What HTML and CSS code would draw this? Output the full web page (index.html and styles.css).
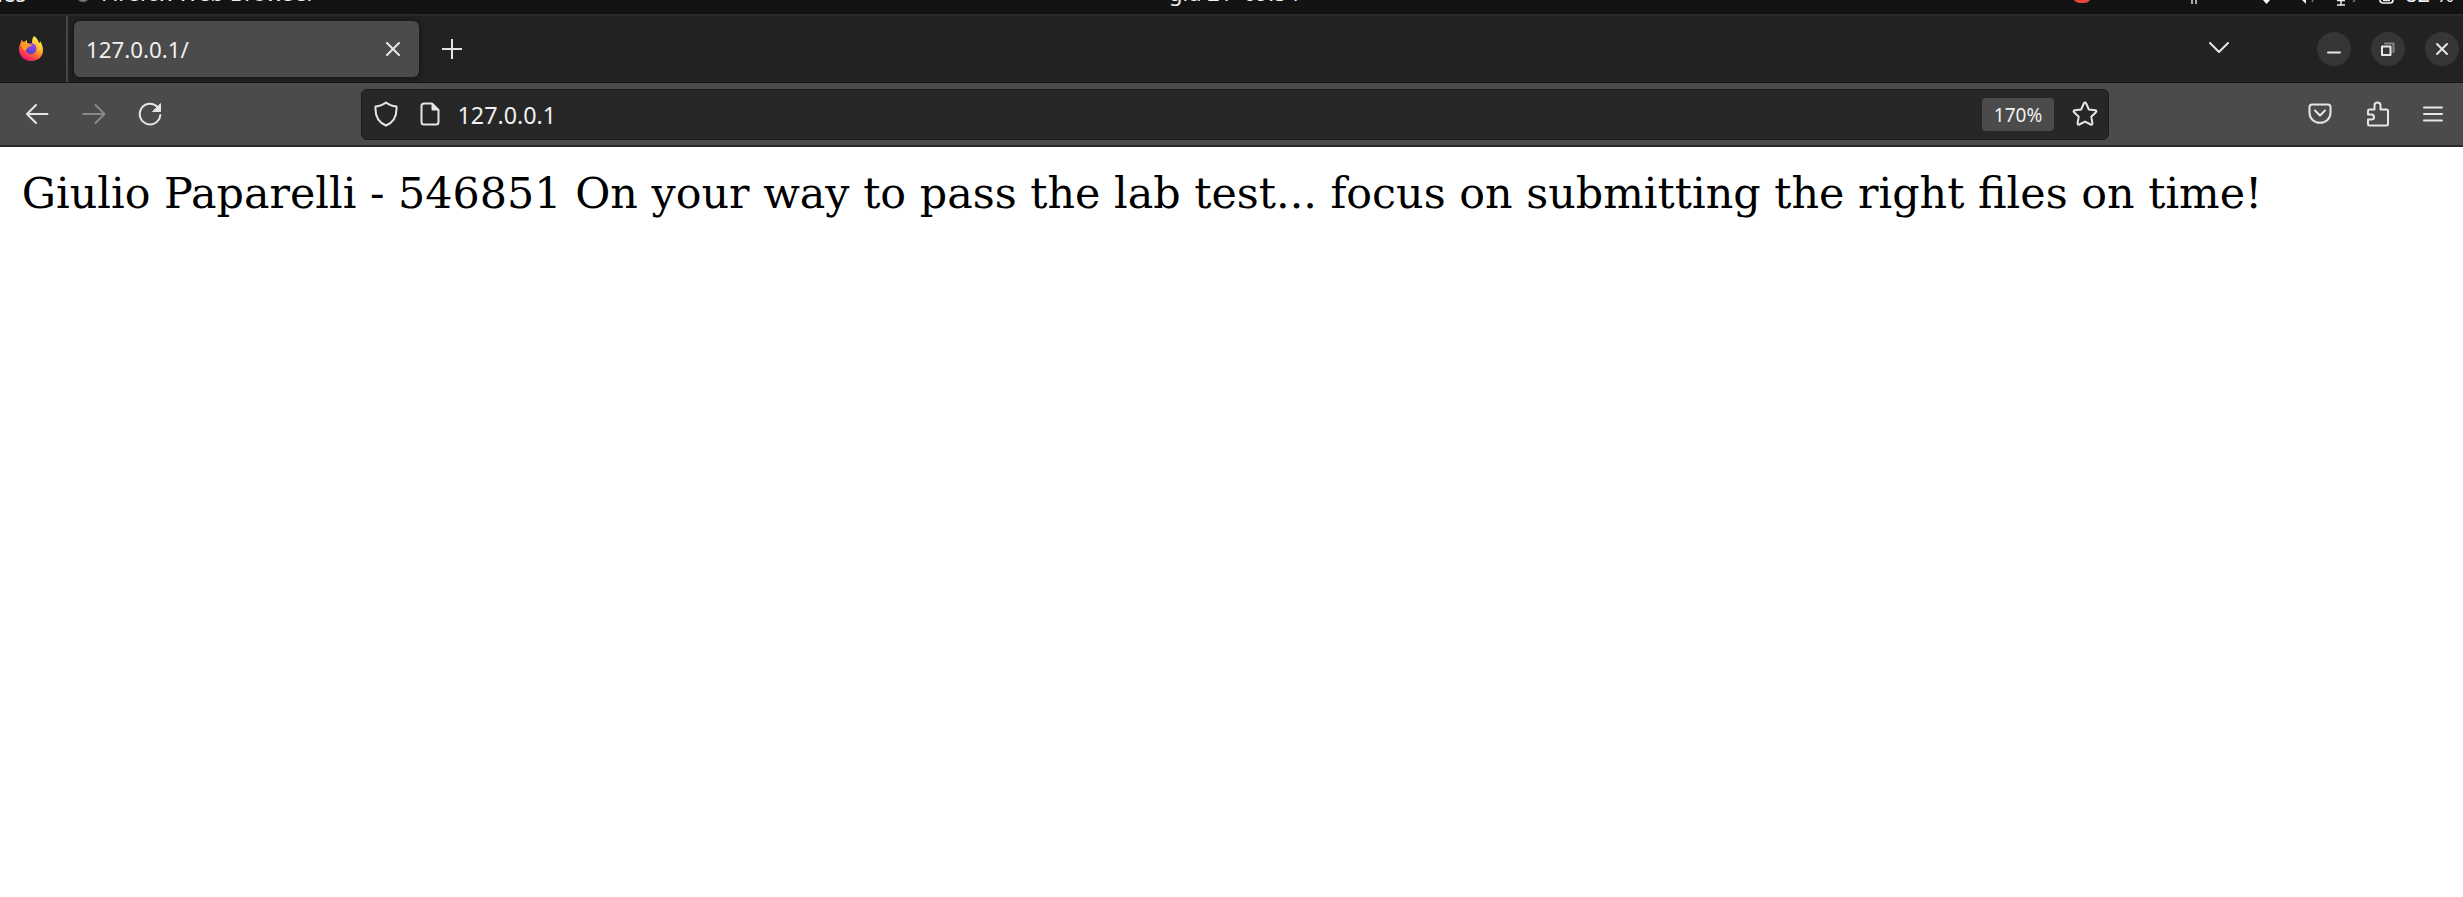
FILE: index.html
```
<!DOCTYPE html>
<html lang="en">
<head>
<meta charset="utf-8">
<title>127.0.0.1/</title>
<link rel="stylesheet" href="styles.css">
</head>
<body>
<header class="system-bar">
  <span class="activities">Activities</span>
  <span class="app-dot"></span>
  <span class="app-name">Firefox Web Browser</span>
  <span class="clock">giu 21  09:54</span>
  <svg class="status" width="350" height="14" viewBox="2050 0 350 14">
    <path d="M2074 0h16q-2 3-6 3h-4q-4 0-6-3z" fill="#e8453c"/>
    <path d="M2192 0v4M2196 0v4" stroke="#ddd" stroke-width="1.5"/>
    <path d="M2263 0h7l-3.500 4z" fill="#fff"/>
    <path d="M2302 0h4v4z" fill="#eee"/>
    <path d="M2313 0l-1 2M2355 0l-2 2" stroke="#777" stroke-width="1.500"/>
    <path d="M2341 0v5M2337 5h8M2337 .5h8" stroke="#eee" stroke-width="1.500"/>
    <path d="M2380 0q0 3 3 3h7q3 0 3-3M2383 .5h7" fill="none" stroke="#eee" stroke-width="1.700"/>
  </svg>
  <span class="battery">82 %</span>
</header>

<nav class="tab-strip">
  <div class="firefox-slot">
    <svg width="26" height="27" viewBox="0 0 26 27">
      <defs>
        <linearGradient id="flame" x1=".8" y1=".1" x2=".25" y2=".95">
          <stop offset="0" stop-color="#fff04a"/><stop offset=".35" stop-color="#ffb52e"/>
          <stop offset=".65" stop-color="#ff5a35"/><stop offset="1" stop-color="#ed1378"/>
        </linearGradient>
        <linearGradient id="globe" x1=".7" y1="0" x2=".4" y2="1">
          <stop offset="0" stop-color="#a24be8"/><stop offset="1" stop-color="#5440c9"/>
        </linearGradient>
      </defs>
      <path d="M16 1c3 2 4 4 5 7 1-.5 1-1 1-2 2 3 3 6 3 9 0 7-5 11-12 11S1 21 1 14c0-3 1-5 2-7V5l3 2 3-2v3l5 1c0-3 0-6 2-8z" fill="url(#flame)"/>
      <circle cx="13" cy="13.500" r="5.500" fill="url(#globe)"/>
      <path d="M3 9c3-2 6-1 7 0 1 .5 3 .5 4 .8-.5 1.500-2 1.700-3.500 2.200C9 13 8 14 8 16c-3-1-5-4-5-7z" fill="#ff9a24"/>
    </svg>
  </div>
  <div class="tab">
    <span class="tab-title">127.0.0.1/</span>
    <svg class="line" width="14" height="14" viewBox="0 0 14 14"><path d="M1 1l12 12M13 1L1 13"/></svg>
  </div>
  <svg class="line new-tab" width="20" height="20" viewBox="0 0 20 20"><path d="M10 .5v19M.5 10h19"/></svg>
  <div class="window-controls">
    <svg class="line tabs-menu" width="20" height="12" viewBox="0 0 20 12"><path d="M1 1l9 9 9-9"/></svg>
    <span class="round"><svg class="line" width="34" height="34" viewBox="0 0 34 34"><path d="M11 20.500h12"/></svg></span>
    <span class="round"><svg class="line" width="34" height="34" viewBox="0 0 34 34"><path class="shade" d="M14 11.500h8.500V20"/><path d="M11 14.500h8.500v8.500H11z"/></svg></span>
    <span class="round"><svg class="line" width="34" height="34" viewBox="0 0 34 34"><path d="M12 12l10 10M22 12L12 22"/></svg></span>
  </div>
</nav>

<div class="toolbar">
  <div class="history">
    <svg class="line" width="24" height="22" viewBox="0 0 24 22"><path d="M22.500 11H2M11 2l-9 9 9 9"/></svg>
    <svg class="line disabled" width="24" height="22" viewBox="0 0 24 22"><path d="M1.500 11h21M13.500 2l9 9-9 9"/></svg>
    <svg class="line" width="24" height="24" viewBox="0 0 24 24"><path d="M19.500 5A10.300 10.300 0 1 0 22.300 13"/><path class="solid" d="M22.500 2v7.500H15z"/></svg>
  </div>
  <div class="url-bar">
    <svg class="line" width="24" height="26" viewBox="0 0 24 26"><path d="M12 1.500C9 4 5.500 5 1.500 5.500 1 14 3.500 21 12 24.500 20.500 21 23 14 22.500 5.500 18.500 5 15 4 12 1.500z"/></svg>
    <svg class="line page-icon" width="20" height="24" viewBox="0 0 20 24"><path d="M12 1.500H4Q1.500 1.500 1.500 4v16q0 2.500 2.500 2.500h12q2.500 0 2.500-2.500V8z"/><path class="solid" d="M12 1.500V8h6.500z"/></svg>
    <span class="url">127.0.0.1</span>
    <span class="zoom-level">170%</span>
    <svg class="line" width="26" height="26" viewBox="0 0 26 26"><path d="M11.800 2.500q1.200-2 2.400 0l2.600 5.900 6.400.8q2 .5.700 2.100l-4.600 4.500 1.100 6.400q.2 2-1.700 1.300L13 20.600l-5.700 2.900q-1.900.7-1.700-1.300l1.100-6.400-4.600-4.500q-1.300-1.600.7-2.100l6.400-.8z"/></svg>
  </div>
  <div class="tools">
    <svg class="line" width="24" height="22" viewBox="0 0 24 22"><path d="M4 1.500h16q2.500 0 2.500 2.500v6a10.500 9.800 0 0 1-21 0V4Q1.500 1.500 4 1.500zM7 7.500l5 5 5-5"/></svg>
    <svg class="line" width="24" height="26" viewBox="0 0 24 26"><path d="M3.500 24.500Q2 24.500 2 23V18.500h3.500q2.500 0 2.500-2.500t-2.500-2.500H2V10q0-1.500 1.500-1.500H8.500V4.500q0-3 3-3t3 3v4h6Q22 8.500 22 10v13q0 1.500-1.500 1.500z"/></svg>
    <svg class="line" width="20" height="16" viewBox="0 0 20 16"><path d="M1 1.500h18M1 8h18M1 14.500h18"/></svg>
  </div>
</div>

<main class="page">Giulio Paparelli - 546851 On your way to pass the lab test... focus on submitting the right files on time!</main>
</body>
</html>
```
FILE: styles.css
```
* { box-sizing: border-box; }
html { height: 100%; }
body {
  margin: 0;
  height: 100%;
  display: flex;
  flex-direction: column;
  overflow: hidden;
  background: #fff;
  color: #f0f0f0;
  font-family: "Noto Sans", sans-serif;
}
svg { display: block; flex: none; }
.line { fill: none; stroke: #e6e6e6; stroke-width: 2; stroke-linecap: round; stroke-linejoin: round; }
.line .solid { fill: #e6e6e6; stroke-width: 1; }
.line .shade { stroke: #858585; }

/* Desktop bar, scrolled so only the feet of its labels show */
.system-bar {
  height: 16px;
  flex: none;
  display: flex;
  overflow: hidden;
  background: #131313;
  border-bottom: 2px solid #2b2b2b;
  font-size: 22px;
  line-height: 30px;
  white-space: pre;
}
.system-bar span { margin-top: -22px; height: 30px; }
.system-bar .activities { width: 102px; margin-left: -76px; text-align: right; }
.system-bar .app-dot { width: 14px; height: 14px; margin: -12px 0 0 50px; border-radius: 50%; background: #777; }
.system-bar .app-name { width: 214px; margin-left: 11px; font-size: 22.2px; }
.system-bar .clock { width: 132px; margin-left: 854px; font-size: 21.8px; }
.status { margin-left: 749px; }
.system-bar .battery { margin-left: 5px; }

.tab-strip {
  height: 67px;
  flex: none;
  display: flex;
  align-items: center;
  background: #222;
  border-bottom: 1px solid #151515;
}
.firefox-slot {
  width: 68px;
  height: 66px;
  display: flex;
  align-items: center;
  padding: 0 0 2px 18px;
  border-right: 2px solid #464646;
}
.tab {
  width: 345px;
  height: 56px;
  margin-left: 6px;
  padding: 0 19px 0 12px;
  display: flex;
  align-items: center;
  justify-content: space-between;
  background: #4b4b4b;
  border-radius: 6px;
  box-shadow: 0 0 6px #101010;
}
.tab-title { font-size: 22.3px; line-height: 30px; padding-top: 2px; }
.new-tab { margin-left: 23px; }
.window-controls { margin-left: auto; display: flex; align-items: center; gap: 20px; padding-right: 4px; }
.tabs-menu { margin: -3px 68px 0 0; }
.round { border-radius: 50%; background: #363636; }

.toolbar {
  height: 64px;
  flex: none;
  display: flex;
  align-items: center;
  background: #4b4b4b;
  border-bottom: 2px solid #292929;
}
.history { width: 361px; padding-left: 25px; display: flex; align-items: center; gap: 32.5px; }
.disabled { opacity: .4; }
.url-bar {
  width: 1748px;
  height: 51px;
  padding: 0 10px 0 12px;
  display: flex;
  align-items: center;
  background: #272727;
  border: 1px solid #1b1b1b;
  border-radius: 6px;
}
.page-icon { margin-left: 22px; }
.url { margin-left: 17.5px; padding-top: 1px; font-size: 23.3px; line-height: 30px; }
.zoom-level {
  width: 72px;
  height: 33px;
  margin: 0 18px 0 auto;
  background: #4b4b4b;
  border-radius: 4px;
  font-size: 19px;
  line-height: 35px;
  text-align: center;
}
.tools { margin-left: auto; padding-right: 20px; display: flex; align-items: center; gap: 33.5px; }

.page {
  flex: 1;
  padding: 21px 0 0 21.8px;
  color: #000;
  font-family: "DejaVu Serif", serif;
  font-size: 42.83px;
  line-height: 51px;
  white-space: nowrap;
}
```
